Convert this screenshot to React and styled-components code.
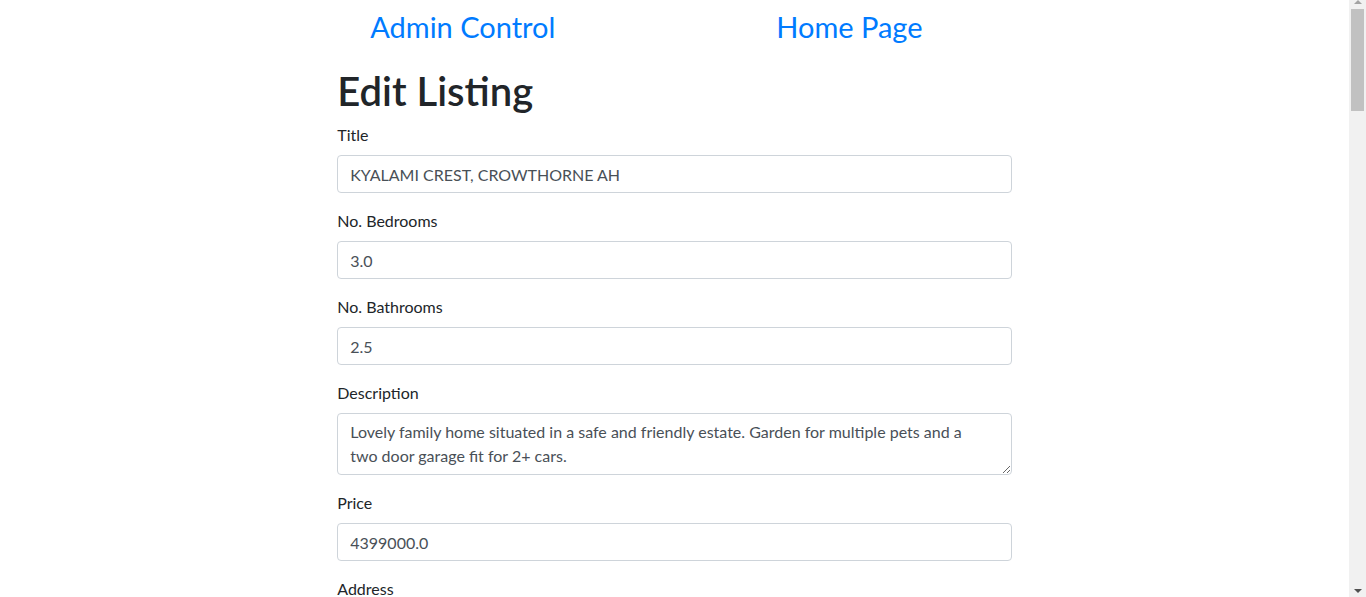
import React from "react";
import styled, { createGlobalStyle } from "styled-components";

const GlobalStyle = createGlobalStyle`
  html, body {
    margin: 0;
    padding: 0;
    background: #fff;
  }
  body {
    padding-right: 17px;
    font-family: Lato, "Liberation Sans", Arial, sans-serif;
    font-size: 16px;
    line-height: 1.5;
    color: #212529;
  }
  *, *::before, *::after {
    box-sizing: border-box;
  }
`;

const fields = [
  { label: "Title", value: "KYALAMI CREST, CROWTHORNE AH" },
  { label: "No. Bedrooms", value: "3.0" },
  { label: "No. Bathrooms", value: "2.5" },
  {
    label: "Description",
    value:
      "Lovely family home situated in a safe and friendly estate. Garden for multiple pets and a two door garage fit for 2+ cars.",
    multiline: true,
  },
  { label: "Price", value: "4399000.0" },
  { label: "Address", value: "12 Kyalami Crest" },
  { label: "City", value: "Midrand" },
  { label: "Province", value: "Gauteng" },
  { label: "Zip Code", value: "1684" },
  { label: "Garage", value: "2" },
  { label: "Square Metres", value: "320" },
  { label: "Lot Size", value: "800" },
  { label: "Main Photo", value: "photos/kyalami_main.jpg" },
  { label: "Photo 1", value: "photos/kyalami_1.jpg" },
  { label: "Photo 2", value: "photos/kyalami_2.jpg" },
  { label: "Photo 3", value: "photos/kyalami_3.jpg" },
  { label: "Photo 4", value: "photos/kyalami_4.jpg" },
  { label: "Photo 5", value: "photos/kyalami_5.jpg" },
  { label: "Photo 6", value: "photos/kyalami_6.jpg" },
  { label: "List Date", value: "2021-03-14" },
  { label: "Realtor", value: "1" },
];

const App = () => {
  return (
    <>
      <GlobalStyle />
      <Page>
        <Nav>
          <NavLink href="#">Admin Control</NavLink>
          <NavLink href="#">Home Page</NavLink>
        </Nav>
        <Heading>Edit Listing</Heading>
        <form onSubmit={(e) => e.preventDefault()}>
          {fields.map((f) => (
            <FormGroup key={f.label}>
              <Label>{f.label}</Label>
              {f.multiline ? (
                <TextArea rows={2} defaultValue={f.value} />
              ) : (
                <Input type="text" defaultValue={f.value} />
              )}
            </FormGroup>
          ))}
          <SubmitButton type="submit">Save Changes</SubmitButton>
        </form>
      </Page>
      {/* window scrollbar, drawn since the headless page hides its own */}
      <Scrollbar>
        <ArrowUp />
        <Thumb />
        <ArrowDown />
      </Scrollbar>
    </>
  );
};

const Page = styled.div`
  width: 50%;
  margin: 0 auto;
  padding-bottom: 1200px;
`;

const Nav = styled.nav`
  display: grid;
  grid-template-columns: 406px 1fr;
  height: 67px;
  padding: 10px 0 0 33px;
`;

const NavLink = styled.a`
  font-size: 29px;
  line-height: 1.2;
  color: #007bff;
  text-decoration: none;
  font-weight: 400;
`;

const Heading = styled.h1`
  margin: 0 0 8px;
  font-size: 40px;
  font-weight: 600;
  line-height: 1.2;
  color: #212529;
`;

const FormGroup = styled.div`
  margin-bottom: 16px;
`;

const Label = styled.label`
  display: inline-block;
  margin-bottom: 8px;
`;

const controlStyles = `
  display: block;
  width: 100%;
  padding: 6px 12px;
  font-family: inherit;
  font-size: 16px;
  line-height: 1.5;
  color: #495057;
  background: #fff;
  border: 1px solid #ced4da;
  border-radius: 4px;
  outline: none;
`;

const Input = styled.input`
  ${controlStyles}
  height: 38px;
`;

const TextArea = styled.textarea`
  ${controlStyles}
  padding-right: 26px;
  resize: vertical;
`;

const SubmitButton = styled.button`
  font-family: inherit;
  font-size: 16px;
  line-height: 1.5;
  padding: 6px 12px;
  color: #fff;
  background: #007bff;
  border: 1px solid #007bff;
  border-radius: 4px;
`;

const Scrollbar = styled.div`
  position: fixed;
  top: 0;
  right: 0;
  bottom: 0;
  width: 17px;
  background: #f1f1f1;
`;

const Thumb = styled.div`
  position: absolute;
  top: 9px;
  left: 2px;
  width: 13px;
  height: 102px;
  background: #c1c1c1;
`;

const ArrowUp = styled.div`
  position: absolute;
  top: 0;
  left: 5px;
  width: 0;
  height: 0;
  border-left: 4px solid transparent;
  border-right: 4px solid transparent;
  border-bottom: 4px solid #a3a3a3;
`;

const ArrowDown = styled.div`
  position: absolute;
  bottom: 4px;
  left: 5px;
  width: 0;
  height: 0;
  border-left: 4px solid transparent;
  border-right: 4px solid transparent;
  border-top: 4px solid #505050;
`;

export default App;
